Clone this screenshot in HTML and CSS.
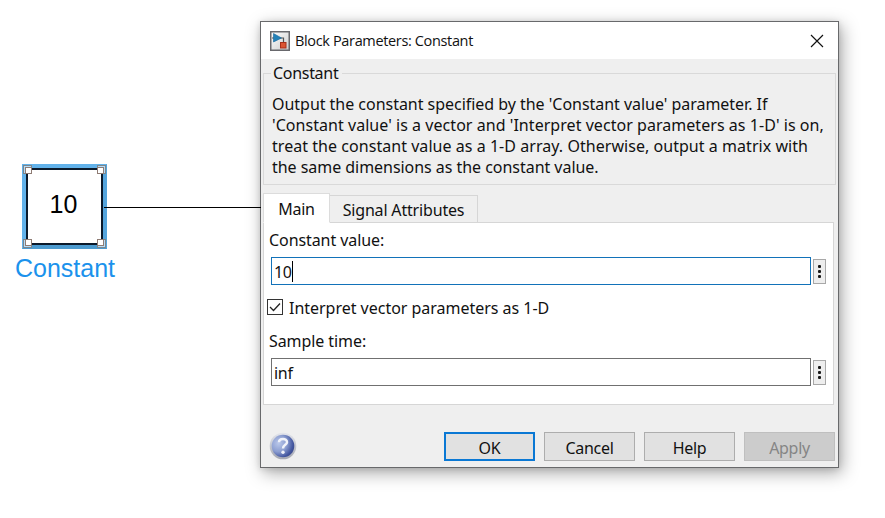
FILE: index.html
```
<!DOCTYPE html>
<html lang="en">
<head>
<meta charset="utf-8">
<title>Block Parameters: Constant</title>
<link rel="stylesheet" href="styles.css">
</head>
<body>
<main class="canvas">
  <div class="wire"></div>
  <div class="block">
    <span class="block-value">10</span>
    <i class="handle nw"></i><i class="handle ne"></i><i class="handle sw"></i><i class="handle se"></i>
  </div>
  <div class="block-name">Constant</div>

  <section class="dialog">
    <header class="titlebar">
      <svg class="app-icon" width="20" height="20" viewBox="0 0 20 20">
        <defs><linearGradient id="ig" x1="0" y1="0" x2="1" y2="1"><stop offset="0" stop-color="#fff"/><stop offset="1" stop-color="#ccc"/></linearGradient></defs>
        <rect x=".75" y=".75" width="18.5" height="18.5" fill="url(#ig)" stroke="#68686c" stroke-width="1.5"/>
        <path d="M2 7h11.500v5" fill="none" stroke="#555" stroke-width="1.200"/>
        <path d="M3.500 2.500L11.500 7L3.500 11Z" fill="#2482b8" stroke="#14659a" stroke-width=".6"/>
        <rect x="10.500" y="11.500" width="5.500" height="5.500" fill="#db5432" stroke="#a92f18"/>
      </svg>
      <h1 class="title">Block Parameters: Constant</h1>
      <svg class="close" width="14" height="14" viewBox="0 0 14 14"><path d="M1 1L13 13M13 1L1 13" stroke="#111" stroke-width="1.150"/></svg>
    </header>
    <fieldset class="group">
      <legend>Constant</legend>
      <p class="desc"><span class="l1">Output the constant specified by the 'Constant value' parameter. If</span><br><span class="l2">'Constant value' is a vector and 'Interpret vector parameters as 1-D' is on,</span><br><span class="l3">treat the constant value as a 1-D array. Otherwise, output a matrix with</span><br><span class="l4">the same dimensions as the constant value.</span></p>
    </fieldset>
    <nav class="tabs">
      <div class="tab active">Main</div>
      <div class="tab"><span class="sig">Signal Attributes</span></div>
    </nav>
    <div class="panel">
      <div class="label">Constant value:</div>
      <div class="row">
        <div class="field focused">10<i class="caret"></i></div>
        <div class="more"><i></i><i></i><i></i></div>
      </div>
      <div class="check">
        <svg class="box" width="16" height="16" viewBox="0 0 16 16"><rect x=".5" y=".5" width="15" height="15" fill="#fff" stroke="#333"/><path d="M3 8L6.500 11.500L13 4.500" fill="none" stroke="#222" stroke-width="1.300"/></svg>
        <span class="interp">Interpret vector parameters as 1-D</span>
      </div>
      <div class="label second">Sample time:</div>
      <div class="row">
        <div class="field">inf</div>
        <div class="more"><i></i><i></i><i></i></div>
      </div>
    </div>
    <footer class="actions">
      <svg class="help" width="28" height="28" viewBox="0 0 28 28">
        <defs>
          <radialGradient id="hg" cx=".3" cy=".38" r=".75"><stop offset="0" stop-color="#b9c7ea"/><stop offset=".5" stop-color="#8b9dd0"/><stop offset=".85" stop-color="#4457a0"/><stop offset="1" stop-color="#3a498b"/></radialGradient>
          <linearGradient id="rg" x1="0" y1="0" x2="0" y2="1"><stop offset="0" stop-color="#e3e5ec"/><stop offset="1" stop-color="#a5a8b2"/></linearGradient>
        </defs>
        <circle cx="14" cy="14" r="13.300" fill="url(#rg)"/>
        <circle cx="14" cy="14" r="11.300" fill="url(#hg)"/>
        <path d="M10 10.300C10 5.900 18 5.900 18 10.200C18 13 14 12.700 14 16.500" fill="none" stroke="#f1f3fa" stroke-width="2.500"/>
        <circle cx="14" cy="20.200" r="1.700" fill="#f1f3fa"/>
      </svg>
      <div class="btn primary">OK</div>
      <div class="btn">Cancel</div>
      <div class="btn">Help</div>
      <div class="btn disabled">Apply</div>
    </footer>
  </section>
</main>
</body>
</html>
```
FILE: styles.css
```
* { box-sizing: border-box; }
body { margin: 0; background: #fff; }
.canvas { position: relative; width: 885px; height: 518px; overflow: hidden; }

.wire { position: absolute; left: 104px; top: 207px; width: 157px; height: 1px; background: #000; z-index: 2; }
.block {
  position: absolute; left: 22px; top: 164px; width: 85px; height: 85px;
  border: 4px solid #62b2ea; border-right-color: #55a5dd; border-bottom-color: #4c9bd0;
  background: #fff; box-shadow: inset 0 0 0 2px #0b1a2b;
  display: flex; justify-content: center; padding-top: 22px;
}
.block-value { font: 25px/28px "Liberation Sans", sans-serif; color: #000; margin-right: 2px; }
.handle { position: absolute; width: 9px; height: 9px; border: 1px solid #7d868c; background: #b4dcf8; }
.handle::after { content: ""; position: absolute; width: 5px; height: 5px; border: 1px solid #8f7c74; background: #fff; }
.nw { left: -3px; top: -3px; } .ne { right: -3px; top: -3px; }
.sw { left: -3px; bottom: -3px; } .se { right: -3px; bottom: -3px; }
.nw::after { right: -1px; bottom: -1px; } .ne::after { left: -1px; bottom: -1px; }
.sw::after { right: -1px; top: -1px; } .se::after { left: -1px; top: -1px; }
.block-name { position: absolute; left: 15px; top: 254px; font: 25px/29px "Liberation Sans", sans-serif; color: #1b92ec; white-space: nowrap; }

.dialog {
  position: absolute; left: 260px; top: 21px; width: 579px; height: 447px;
  border: 1px solid #68696b; background: #efefef;
  box-shadow: 3px 5px 16px rgba(0,0,0,.34), 0 1px 6px rgba(0,0,0,.12);
  font: 16px/21px "Noto Sans", sans-serif; letter-spacing: -.3px; color: #111;
  display: flex; flex-direction: column; white-space: nowrap;
}
.titlebar { height: 37px; flex: none; background: #fff; display: flex; align-items: center; padding: 0 14px 0 9px; }
.title { margin: 0 auto 0 5px; font: 14.500px/20px "Open Sans", sans-serif; letter-spacing: -.35px; }
.group { margin: 4px 2px 0 2px; height: 122px; flex: none; border: 1px solid #d9d9d9; padding: 0 8px; min-width: 0; }
.group legend { padding: 0 4px 0 2px; margin-left: -1px; height: 21px; }
.desc { margin: 10px 0 0; }
.l1 { letter-spacing: -.03px; }
.l2, .l3 { letter-spacing: .045px; }
.l4 { letter-spacing: -.04px; }
.tabs { display: flex; align-items: flex-end; height: 30px; margin: 8px 2px 0; position: relative; z-index: 1; flex: none; }
.tab { width: 148px; height: 28px; border: 1px solid #d6d6d6; border-left: 0; display: flex; align-items: center; justify-content: center; padding-top: 2px; }
.tab.active { width: 67px; height: 30px; background: #fff; border: 1px solid #dcdcdc; border-bottom-color: #fff; }
.sig { letter-spacing: -.17px; }
.panel { margin: -1px 4px 0 2px; height: 183px; flex: none; background: #fff; border: 1px solid #d6d6d6; padding: 7px 6px 0 5px; }
.label { height: 21px; letter-spacing: -.08px; }
.row { display: flex; align-items: center; gap: 2px; padding-left: 2px; margin-top: 6px; }
.field { width: 540px; height: 28px; border: 1px solid #707070; padding: 4px 0 0 2px; display: flex; }
.focused { border-color: #1272b9; }
.caret { width: 1px; height: 21px; margin-top: -1px; background: #000; }
.more { width: 13px; height: 25px; border: 1px solid #a8a8a8; background: #eee; display: flex; flex-direction: column; align-items: center; justify-content: center; gap: 2px; }
.more i { width: 3px; height: 3px; background: #181818; border-radius: 1px; }
.check { display: flex; align-items: center; margin: 12px 0 0 -2px; height: 22px; gap: 6px; }
.box { margin-top: -2px; }
.interp { letter-spacing: -.02px; padding-top: 1px; }
.second { margin-top: 12px; }
.actions { display: flex; gap: 9px; padding: 0 3px 0 8px; margin-top: 27px; }
.help { margin-right: auto; }
.btn { width: 91px; height: 29px; border: 1px solid #adadad; background: #e1e1e1; display: flex; align-items: center; justify-content: center; padding-top: 3px; }
.primary { border: 2px solid #0a78d4; }
.disabled { background: #ccc; border-color: #bfbfbf; color: #858585; }
```
